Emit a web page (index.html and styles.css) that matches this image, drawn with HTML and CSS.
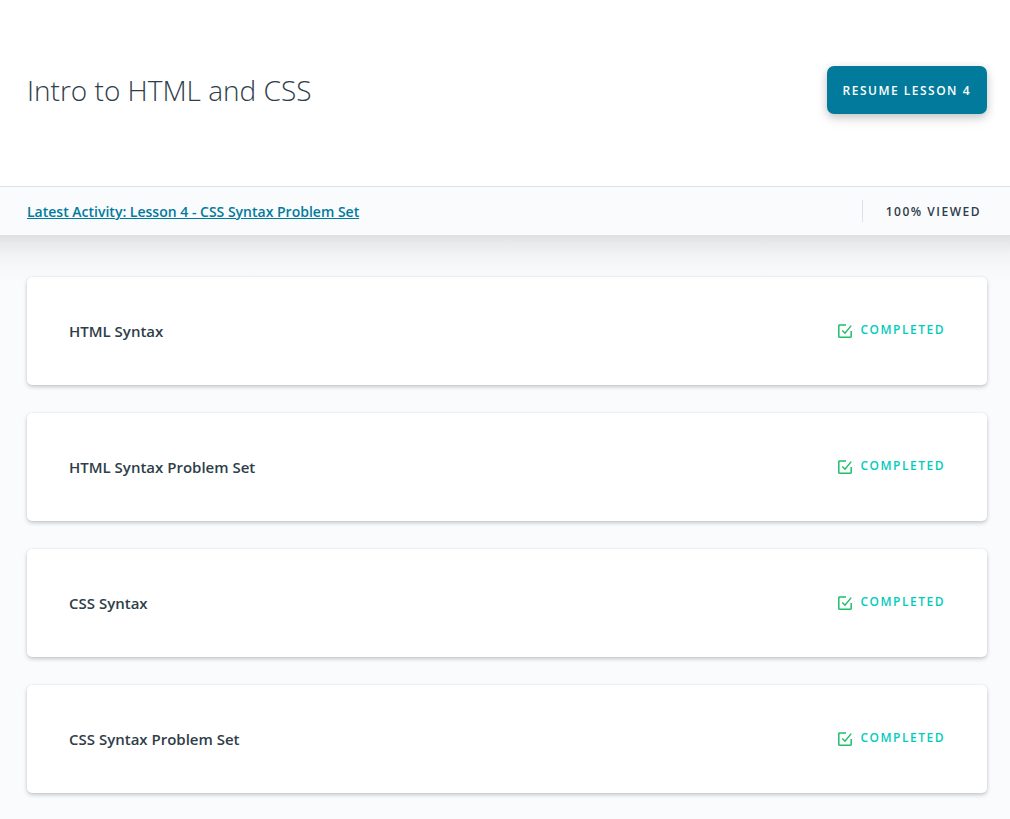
FILE: index.html
```html
<!DOCTYPE html>
<html lang="en">
<head>
<meta charset="utf-8">
<meta name="viewport" content="width=device-width, initial-scale=1">
<title>Intro to HTML and CSS</title>
<link rel="stylesheet" href="styles.css">
</head>
<body>
<svg class="sprite" aria-hidden="true">
  <symbol id="check" viewBox="0 0 16 16">
    <path d="M9 2H2.500a.7.700 0 0 0-.7.700v10.800a.7.700 0 0 0 .7.700h11a.7.700 0 0 0 .7-.7V8" />
    <path d="M5.300 7.500l2.700 2.700L14.200 2.600" />
  </symbol>
</svg>
<header class="header">
  <h1 class="title">Intro to HTML and CSS</h1>
  <button class="resume" type="button">Resume Lesson 4</button>
</header>
<div class="activity">
  <a class="latest" href="#latest">Latest Activity: Lesson 4 - CSS Syntax Problem Set</a>
  <span class="viewed">100% Viewed</span>
</div>
<main class="lessons">
  <article class="card">
    <h2 class="name">HTML Syntax</h2>
    <span class="status"><svg class="icon" aria-hidden="true"><use href="#check"/></svg><span class="label">Completed</span></span>
  </article>
  <article class="card">
    <h2 class="name">HTML Syntax Problem Set</h2>
    <span class="status"><svg class="icon" aria-hidden="true"><use href="#check"/></svg><span class="label">Completed</span></span>
  </article>
  <article class="card">
    <h2 class="name">CSS Syntax</h2>
    <span class="status"><svg class="icon" aria-hidden="true"><use href="#check"/></svg><span class="label">Completed</span></span>
  </article>
  <article class="card">
    <h2 class="name">CSS Syntax Problem Set</h2>
    <span class="status"><svg class="icon" aria-hidden="true"><use href="#check"/></svg><span class="label">Completed</span></span>
  </article>
</main>
</body>
</html>
```
FILE: styles.css
```css
* {
  box-sizing: border-box;
}

body {
  margin: 0;
  background: #fafbfd;
  color: #2e3d49;
  font-family: "Open Sans", sans-serif;
}

.sprite {
  display: none;
}

.header {
  display: flex;
  align-items: center;
  justify-content: space-between;
  padding: 66px 23px 72px 27px;
  background: #fff;
}

.title {
  margin: 0;
  font-size: 28px;
  font-weight: 300;
  line-height: 48px;
}

.resume {
  height: 48px;
  padding: 2px 16px 0;
  border: 0;
  border-radius: 7px;
  background: #017a9b;
  box-shadow: 0 6px 16px rgba(0, 0, 0, 0.06), 0 3px 8px rgba(0, 0, 0, 0.2);
  color: #fff;
  font: 600 12px/20px "Open Sans", sans-serif;
  letter-spacing: 0.125em;
  text-transform: uppercase;
  cursor: pointer;
}

.activity {
  display: flex;
  align-items: center;
  justify-content: space-between;
  padding: 13px 29px 13px 27px;
  border-top: 1px solid #dbe2e8;
}

.latest {
  padding-top: 2px;
  color: #017a9b;
  font-size: 14px;
  font-weight: 600;
  line-height: 20px;
}

.viewed {
  padding: 2px 0 0 23px;
  border-left: 1px solid #dbe2e8;
  font-size: 12px;
  font-weight: 600;
  line-height: 20px;
  letter-spacing: 0.125em;
  text-transform: uppercase;
}

.lessons {
  display: grid;
  gap: 28px;
  padding: 42px 23px 26px 27px;
  background: linear-gradient(rgba(0, 0, 0, 0.11), rgba(0, 0, 0, 0.07) 8px, rgba(0, 0, 0, 0.03) 20px, rgba(0, 0, 0, 0.01) 34px, transparent 48px);
}

.card {
  display: flex;
  align-items: center;
  justify-content: space-between;
  padding: 42px;
  border-radius: 5px;
  background: #fff;
  box-shadow: 0 2px 4px rgba(0, 0, 0, 0.2), 0 0 2px rgba(0, 0, 0, 0.08);
}

.name {
  margin: 0;
  font-size: 15px;
  font-weight: 600;
  line-height: 24px;
}

.status {
  display: flex;
  align-items: center;
  gap: 8px;
}

.icon {
  width: 16px;
  height: 16px;
  fill: none;
  stroke: #1fbf6b;
  stroke-width: 1.500;
}

.label {
  padding-bottom: 2px;
  color: #02ccba;
  font-size: 12px;
  font-weight: 600;
  line-height: 20px;
  letter-spacing: 0.125em;
  text-transform: uppercase;
}
```
